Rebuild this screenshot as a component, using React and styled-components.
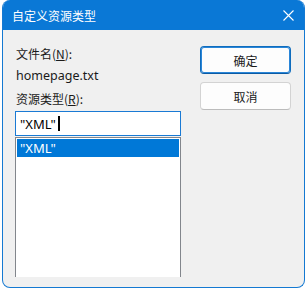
import styled, { createGlobalStyle } from 'styled-components';

const GlobalStyle = createGlobalStyle`
  html, body {
    margin: 0;
    padding: 0;
    background: #ffffff;
  }
  body {
    font-family: "Segoe UI", "Noto Sans", "Noto Sans CJK SC", sans-serif;
  }
`

const Window = styled.div`
  box-sizing: border-box;
  width: 303px;
  height: 288px;
  margin-left: 2px;
  border: 1px solid #1479d2;
  border-top: none;
  border-radius: 8px;
  overflow: hidden;
  background: #f0f0f0;
  display: flex;
  flex-direction: column;
`

const TitleBar = styled.div`
  height: 30px;
  flex-shrink: 0;
  background: #0a78d6;
  display: flex;
  align-items: center;
  justify-content: space-between;
  padding: 0 10px 0 9px;
  color: #ffffff;
  font-family: "Noto Sans CJK SC", sans-serif;
  font-size: 12px;
`

const Body = styled.div`
  flex: 1;
  display: flex;
  padding: 15px 0 0 12px;
  gap: 19px;
`

const LeftColumn = styled.div`
  width: 166px;
  display: flex;
  flex-direction: column;
`

const Label = styled.div`
  font-family: "Noto Sans CJK SC", sans-serif;
  font-size: 12px;
  line-height: 17px;
  color: #1a1a1a;
  margin-bottom: ${props => props.gap || 0}px;
  padding-left: 1px;
`

const FileName = styled.div`
  font-family: "Noto Sans", sans-serif;
  font-size: 12.5px;
  line-height: 17px;
  color: #1a1a1a;
  margin: 1px 0 6px;
  padding-left: 1px;
`

const Input = styled.div`
  box-sizing: border-box;
  height: 25px;
  border: 1px solid #1a7ad4;
  background: #ffffff;
  display: flex;
  align-items: center;
  padding-left: 4px;
  font-family: "Noto Sans", sans-serif;
  font-size: 13px;
  color: #000000;
`

const Caret = styled.span`
  display: inline-block;
  width: 2px;
  height: 15px;
  background: #000000;
  margin-left: 2px;
`

const ListBox = styled.div`
  box-sizing: border-box;
  height: 140px;
  margin-top: 1px;
  border: 1px solid #82868c;
  border-bottom: none;
  background: #ffffff;
  padding: 1px;
`

const ListItem = styled.div`
  height: 18px;
  display: flex;
  align-items: center;
  padding-left: 3px;
  font-family: "Noto Sans", sans-serif;
  font-size: 13px;
  background: ${props => (props.selected ? '#0078d7' : 'transparent')};
  color: ${props => (props.selected ? '#ffffff' : '#000000')};
`

const RightColumn = styled.div`
  display: flex;
  flex-direction: column;
  gap: 8px;
  padding-top: 1px;
`

const Button = styled.div`
  box-sizing: border-box;
  width: 91px;
  height: 28px;
  border-radius: 4px;
  background: #fdfdfd;
  border: 1px solid ${props => (props.primary ? '#0f6cbd' : '#d3d3d3')};
  border-bottom-color: ${props => (props.primary ? '#0a5aa3' : '#bcbcbc')};
  box-shadow: ${props => (props.primary ? 'inset 0 0 0 1px #2a86d8' : 'none')};
  display: flex;
  align-items: center;
  justify-content: center;
  font-family: "Noto Sans CJK SC", sans-serif;
  font-size: 12px;
  color: #1a1a1a;
`

function CloseIcon() {
  return (
    <svg width="11" height="11" viewBox="0 0 11 11">
      <path d="M0.5 0.5 L10.5 10.5 M10.5 0.5 L0.5 10.5" stroke="#ffffff" strokeWidth="1.1" />
    </svg>
  )
}

export default function App() {
  return (
    <>
      <GlobalStyle />
      <Window>
        <TitleBar>
          <span>自定义资源类型</span>
          <CloseIcon />
        </TitleBar>
        <Body>
          <LeftColumn>
            <Label gap={4}>文件名(<u>N</u>):</Label>
            <FileName>homepage.txt</FileName>
            <Label gap={4}>资源类型(<u>R</u>):</Label>
            <Input>"XML"<Caret /></Input>
            <ListBox>
              <ListItem selected>"XML"</ListItem>
            </ListBox>
          </LeftColumn>
          <RightColumn>
            <Button primary>确定</Button>
            <Button>取消</Button>
          </RightColumn>
        </Body>
      </Window>
    </>
  )
}
